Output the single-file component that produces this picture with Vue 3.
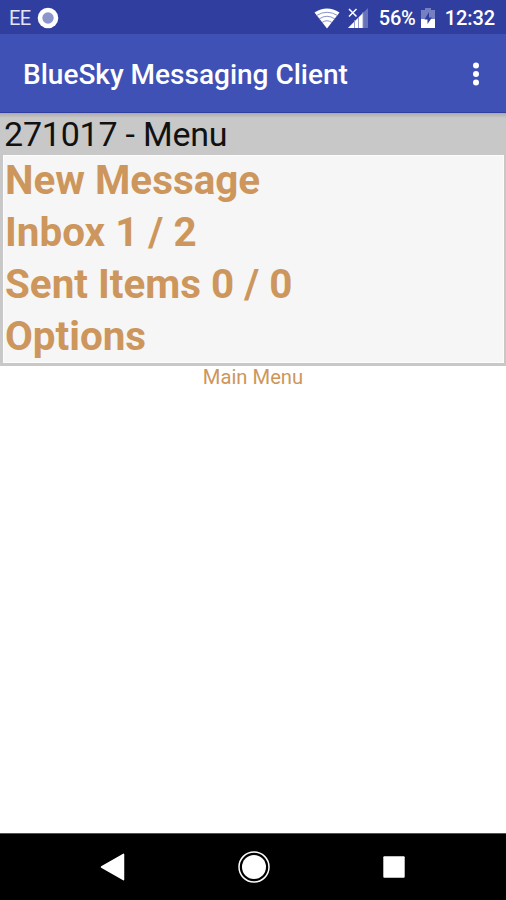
<script setup>
  import { ref } from 'vue'

  const account = ref('271017')
  const selected = ref(null)

  const items = ref([
    { id: 'new', label: 'New Message' },
    { id: 'inbox', label: 'Inbox 1 / 2' },
    { id: 'sent', label: 'Sent Items 0 / 0' },
    { id: 'options', label: 'Options' }
  ])

  const openItem = (item) => {
    selected.value = item.id
  }
</script>

<template>
  <div class="screen">
    <div class="status-bar">
      <span class="carrier">EE</span>
      <svg class="ring" width="22" height="22" viewBox="0 0 22 22">
        <circle cx="11" cy="11" r="10.3" fill="#fff" />
        <circle cx="11" cy="11" r="5.7" fill="#8c95cb" />
      </svg>
      <svg class="wifi" width="26" height="21" viewBox="0 0 26 21">
        <path d="M0.5 4.5 Q13 -3.5 25.5 4.5 L13 20.5 Z" fill="#fff" />
        <path d="M2.5 7.5 Q13 1 23.5 7.5 M5 11 Q13 5.5 21 11 M8 14.5 Q13 11 18 14.5" fill="none" stroke="#7c86c4" stroke-width="0.9" />
      </svg>
      <svg class="signal" width="20" height="20" viewBox="0 0 20 20">
        <path d="M20 0 V20 H0 Z" fill="#6672b9" />
        <path d="M15 5 V20 H0 Z" fill="#fff" />
        <path d="M0 0 H9 V9 H0 Z" fill="#303f9f" />
        <path d="M1 1 L8.5 8.5 M8.5 1 L1 8.5" stroke="#fff" stroke-width="1.5" />
        <path d="M6.5 12 V20 M10.5 9 V20 M15 4 V20" stroke="#8c95cb" stroke-width="0.9" />
      </svg>
      <span class="percent">56%</span>
      <svg class="battery" width="14" height="20" viewBox="0 0 14 20">
        <path d="M4 0 H10 V2 H14 V20 H0 V2 H4 Z" fill="#7580c0" />
        <path d="M0 11 H14 V20 H0 Z" fill="#fff" />
        <path d="M8 4 L3.5 11.5 H6.5 V16 L11 9.5 H8 Z" fill="#303f9f" />
      </svg>
      <span class="clock">12:32</span>
    </div>

    <div class="app-bar">
      <span class="app-title">BlueSky Messaging Client</span>
      <svg class="more" width="8" height="24" viewBox="0 0 8 24">
        <circle cx="4" cy="3.5" r="3" />
        <circle cx="4" cy="12" r="3" />
        <circle cx="4" cy="20.5" r="3" />
      </svg>
    </div>

    <div class="content">
      <div class="panel">
        <div class="heading"><span>{{ account }} - Menu</span></div>
        <div class="menu">
          <div
            v-for="item in items"
            :key="item.id"
            class="menu-item"
            :class="item.id"
            @click="openItem(item)"
          ><span>{{ item.label }}</span></div>
        </div>
      </div>
      <div class="caption"><span>Main Menu</span></div>
    </div>

    <div class="nav-bar">
      <svg width="28" height="32" viewBox="0 0 28 32">
        <path d="M2.5 16 L24.5 3.3 V28.7 Z" fill="#fff" stroke="#fff" stroke-width="1.5" stroke-linejoin="round" />
      </svg>
      <svg width="34" height="34" viewBox="0 0 34 34">
        <circle cx="17" cy="17" r="15" fill="none" stroke="#fff" stroke-width="1.5" />
        <circle cx="17" cy="17" r="12" fill="#fff" />
      </svg>
      <svg width="28" height="28" viewBox="0 0 28 28">
        <rect x="3.3" y="3.3" width="21.4" height="21.4" rx="1" fill="#fff" />
      </svg>
    </div>
  </div>
</template>

<style>
body {
  background: #fff;
}
</style>

<style scoped>
.screen {
  display: flex;
  flex-direction: column;
  width: 506px;
  height: 900px;
  overflow: hidden;
  background: #fff;
  font-family: Roboto, sans-serif;
}

.status-bar {
  display: flex;
  align-items: center;
  box-sizing: border-box;
  height: 34px;
  padding: 2px 11px 0 9px;
  background: #303f9f;
  color: #fff;
  font-size: 20px;
  line-height: 32px;
}

.carrier {
  width: 28px;
  font-size: 20px;
  letter-spacing: -0.5px;
  color: #e3e5f4;
}

.wifi {
  margin-left: auto;
}

.signal {
  margin-left: 8px;
}

.percent {
  width: 37px;
  margin-left: 11px;
  font-weight: 500;
  letter-spacing: -0.2px;
}

.battery {
  margin-left: 5px;
}

.clock {
  margin-left: 10px;
  font-weight: 500;
  letter-spacing: -0.1px;
}

.app-bar {
  display: flex;
  align-items: center;
  justify-content: space-between;
  box-sizing: border-box;
  height: 79px;
  padding: 1px 26px 0 23px;
  border-bottom: 1px solid #303f9f;
  background: #3f51b5;
  color: #fff;
}

.app-title {
  font-size: 28px;
  font-weight: 500;
  line-height: 32px;
  padding-top: 2px;
}

.more {
  fill: #fff;
}

.content {
  flex: 1;
}

.panel {
  box-sizing: border-box;
  height: 253px;
  padding: 0 2px 3px 3px;
  background: linear-gradient(#a9a9a9, #c8c8c8 5px);
}

.heading {
  height: 42px;
  padding-left: 1px;
  color: #111;
  font-size: 34px;
  letter-spacing: -0.22px;
  line-height: 43px;
}

.menu {
  box-sizing: border-box;
  height: 208px;
  background: #f6f6f6;
  border: 1px solid #fcfcfc;
}

.menu-item {
  height: 52px;
  padding-left: 1px;
  color: #cd965c;
  font-size: 40.4px;
  font-weight: 700;
  line-height: 50px;
  cursor: pointer;
}

.caption {
  color: #cd965c;
  font-size: 20.2px;
  line-height: 23px;
  text-align: center;
}

.nav-bar {
  display: flex;
  align-items: center;
  justify-content: space-between;
  box-sizing: border-box;
  height: 67px;
  padding: 0 98px 0 99px;
  border-top: 1px solid #555;
  background: #000;
}
</style>
